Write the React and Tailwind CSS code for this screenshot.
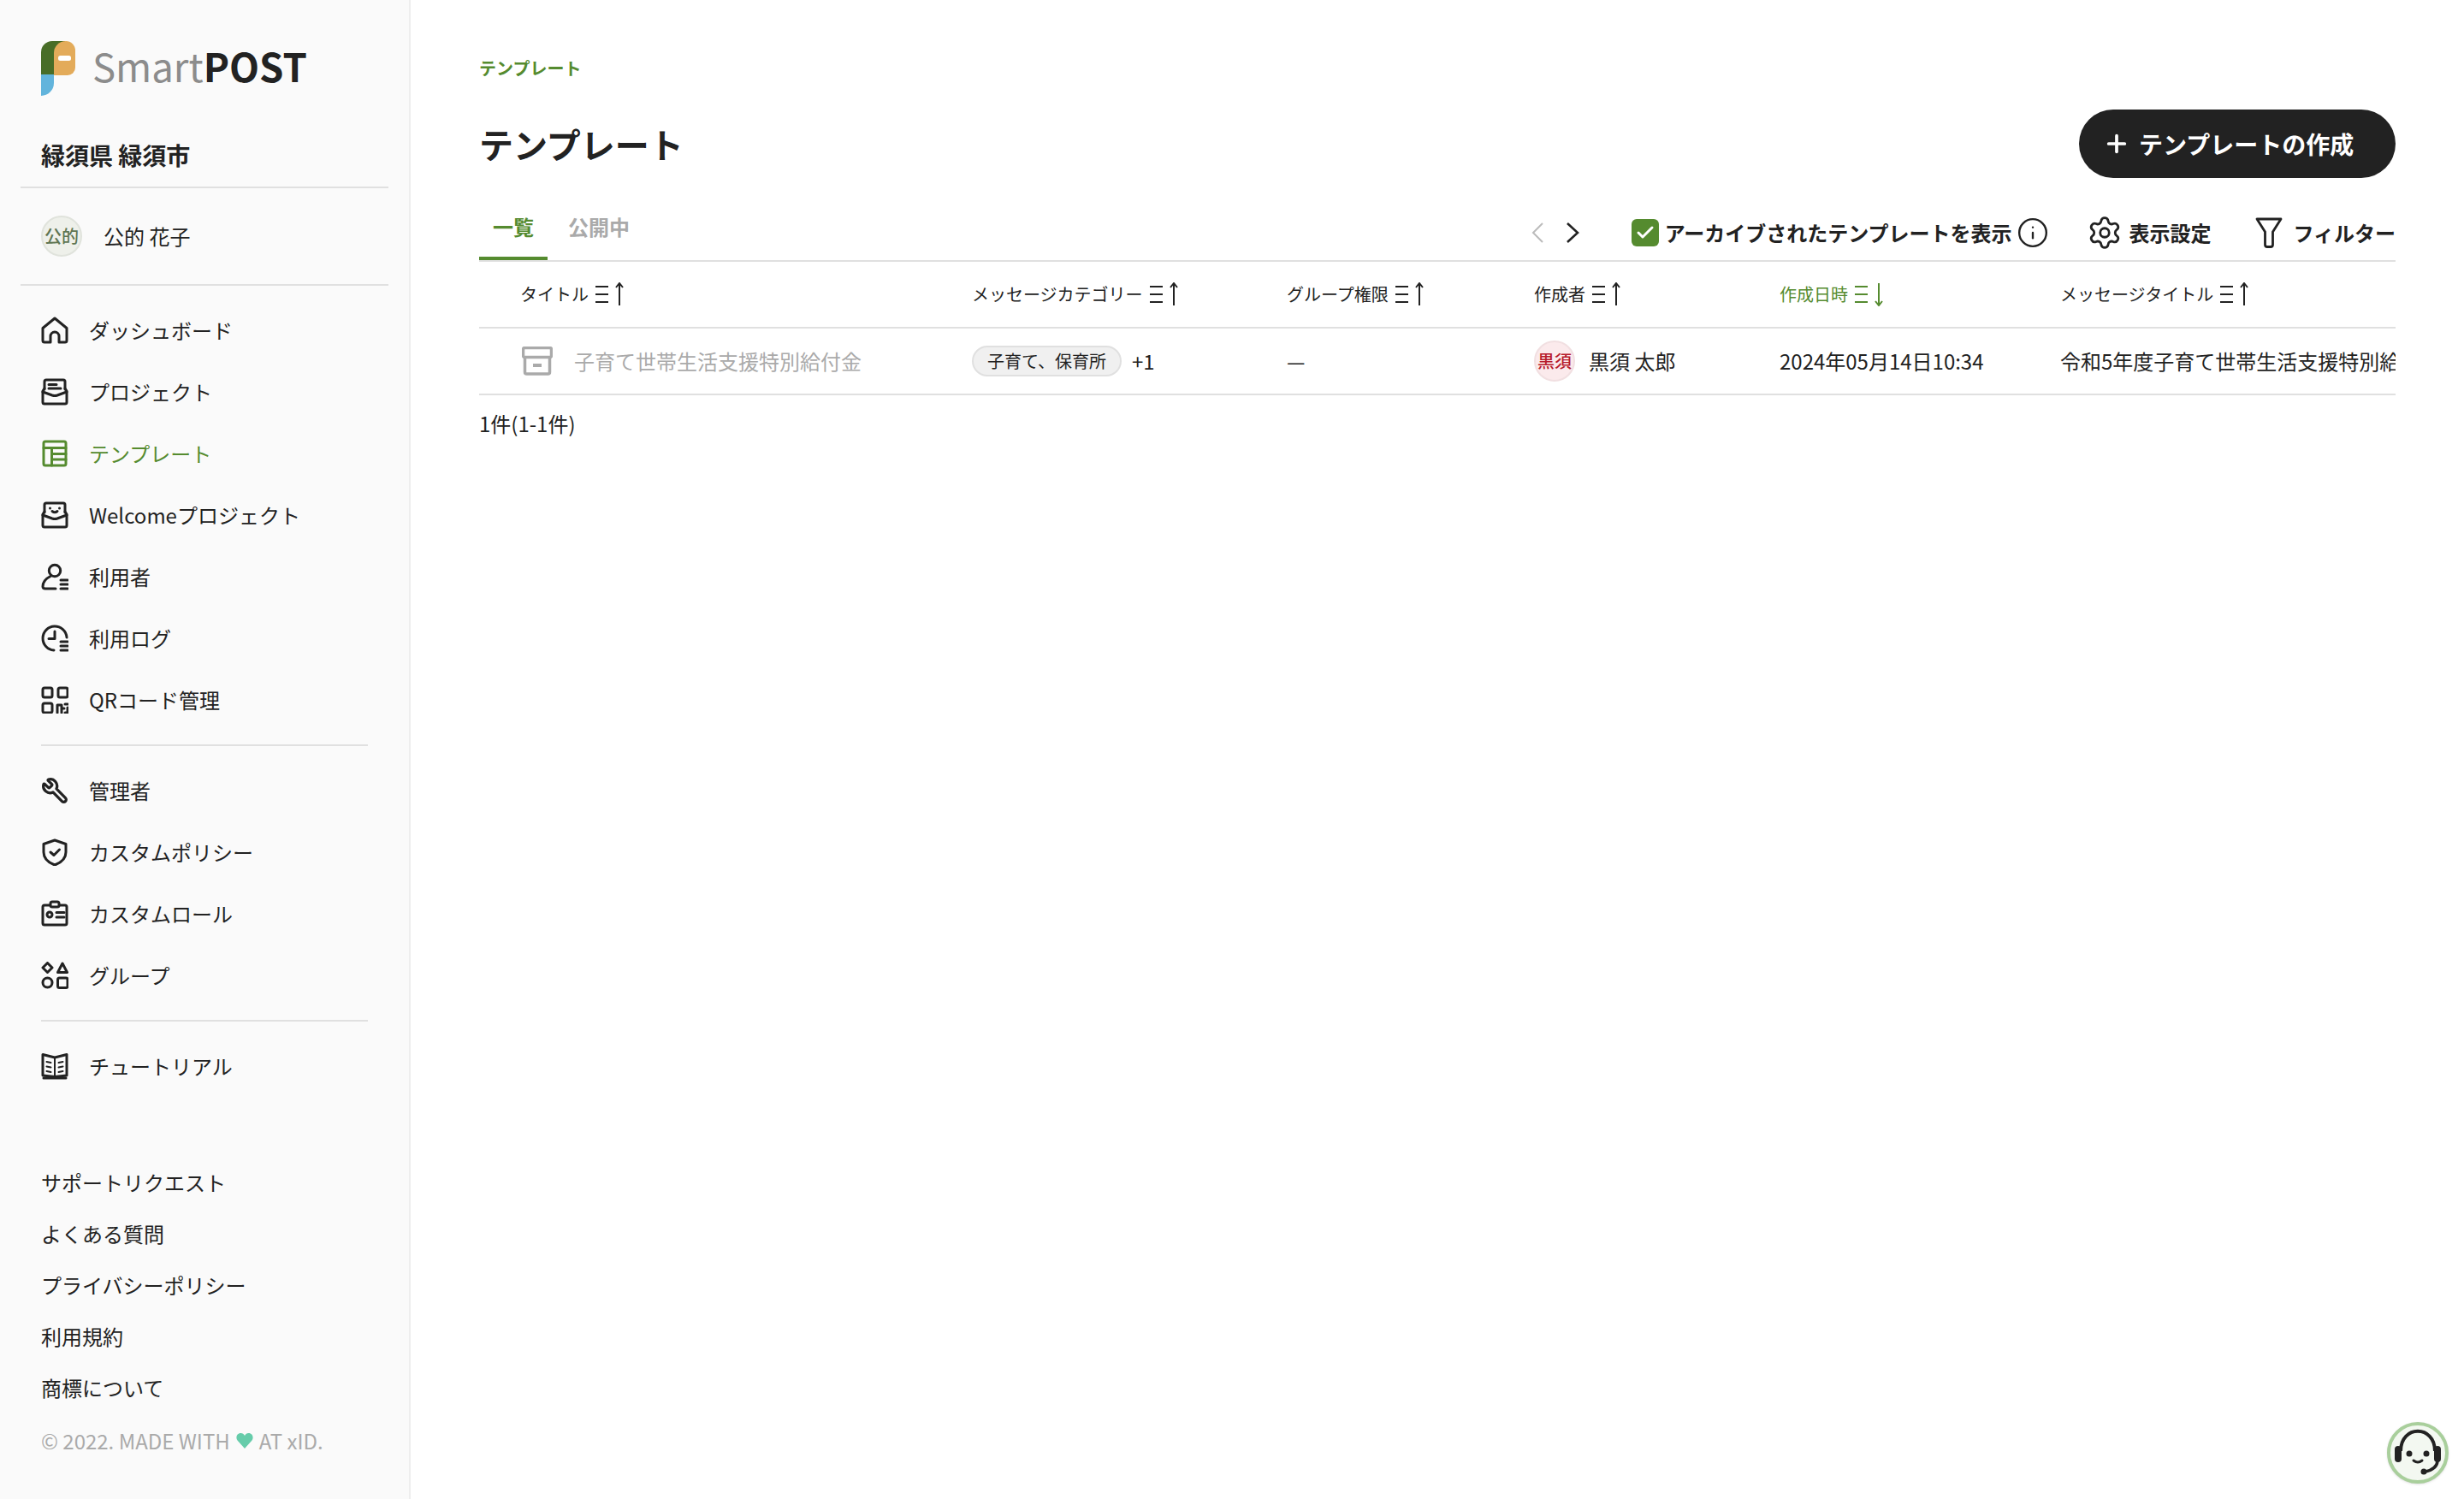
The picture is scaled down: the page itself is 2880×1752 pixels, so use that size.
import React from "react";
import { Wrench, Settings, Info, Plus, Check } from "lucide-react";

function Ic({ children, className = "" }) {
  return (
    <svg
      viewBox="0 0 32 32"
      fill="none"
      stroke="currentColor"
      strokeWidth="3"
      strokeLinecap="round"
      strokeLinejoin="round"
      className={"w-8 h-8 shrink-0 " + className}
    >
      {children}
    </svg>
  );
}

const Tray = () => (
  <>
    <path d="M4 13V4a2 2 0 0 1 2-2h20a2 2 0 0 1 2 2v9" />
    <path d="M4 12l-2 3v13a2 2 0 0 0 2 2h24a2 2 0 0 0 2-2V15l-2-3" />
    <path d="M2 16l11 4q3 1 6 0l11-4" />
  </>
);

const ListLines = () => (
  <path d="M23 20h8M23 25h8M23 30h8" />
);

const icons = {
  home: (
    <Ic>
      <path d="M2 13.500 16 2l14 11.500V28a2 2 0 0 1-2 2h-7v-7a5 5 0 0 0-10 0v7H4a2 2 0 0 1-2-2Z" />
    </Ic>
  ),
  project: (
    <Ic>
      <Tray />
      <path d="M9 7.500h9M9 12h14" />
    </Ic>
  ),
  template: (
    <Ic>
      <rect x="3" y="2" width="26" height="28" rx="2" />
      <path d="M3 9.500h26M12.500 9.500V30M12.500 16.500H29M12.500 23H29" />
    </Ic>
  ),
  welcome: (
    <Ic>
      <Tray />
      <circle cx="10.500" cy="8" r="1.500" fill="currentColor" stroke="none" />
      <circle cx="21.500" cy="8" r="1.500" fill="currentColor" stroke="none" />
      <path d="M13 11.500q3 2.500 6 0" />
    </Ic>
  ),
  user: (
    <Ic>
      <circle cx="16" cy="9" r="6.700" />
      <path d="M11 15.500C6 18 2 22 2 27.500Q2 30 5 30h12" />
      <ListLines />
    </Ic>
  ),
  log: (
    <Ic>
      <path d="M30 15A14 14 0 1 0 15 30" />
      <path d="M16 8v8.500H9" />
      <ListLines />
    </Ic>
  ),
  qr: (
    <Ic>
      <rect x="2" y="2" width="11" height="11" rx="2" />
      <rect x="20" y="2" width="11" height="11" rx="2" />
      <rect x="2" y="20" width="11" height="11" rx="2" />
      <path d="M19 31v-9h5v9M24 26h3M28 21h3M31 25v6h-3" />
    </Ic>
  ),
  wrench: <Wrench size={32} strokeWidth={2.4} className="shrink-0 -scale-x-100" />,
  shield: (
    <Ic>
      <path d="M16 2 29 6.500V16c0 7-5 12-13 15C8 28 3 23 3 16V6.500Z" />
      <path d="m11 16 4 3.500 6.500-6.500" />
    </Ic>
  ),
  role: (
    <Ic>
      <rect x="2" y="6" width="28" height="23" rx="2" />
      <rect x="11" y="2" width="10" height="6" rx="2" fill="#fafafa" />
      <circle cx="10" cy="17" r="3" />
      <path d="M18 14.500h9M18 20h9" />
    </Ic>
  ),
  group: (
    <Ic>
      <path d="M7.500 1.500 13 7l-5.500 5.500L2 7Z" />
      <path d="M25 2l5.500 10.500h-11Z" />
      <circle cx="7.500" cy="24.500" r="5.500" />
      <rect x="19.500" y="19" width="11.500" height="11.500" rx="2" />
    </Ic>
  ),
  book: (
    <Ic>
      <path d="M2 2.500 16 6l14-3.500V27l-14 1.500L2 27Z" />
      <path d="M16 6v22.500M6.500 11l5 1M6.500 16.500l5 1M6.500 22l5 1M25.500 11l-5 1M25.500 16.500l-5 1M25.500 22l-5 1" strokeWidth="2" />
      <path d="M3 30h26" />
    </Ic>
  ),
};

const navMain = [
  ["home", "ダッシュボード"],
  ["project", "プロジェクト"],
  ["template", "テンプレート", true],
  ["welcome", "Welcomeプロジェクト"],
  ["user", "利用者"],
  ["log", "利用ログ"],
  ["qr", "QRコード管理"],
];
const navAdmin = [
  ["wrench", "管理者"],
  ["shield", "カスタムポリシー"],
  ["role", "カスタムロール"],
  ["group", "グループ"],
];
const footerLinks = ["サポートリクエスト", "よくある質問", "プライバシーポリシー", "利用規約", "商標について"];

function NavItem({ icon, label, active }) {
  return (
    <div className={"h-[72px] flex items-center gap-6 pl-12 text-2xl " + (active ? "text-[#558b2f]" : "text-[#222222]")}>
      {icons[icon]}
      <span>{label}</span>
    </div>
  );
}

function SortIcon({ down }) {
  return (
    <svg viewBox="0 0 34 28" className="w-[34px] h-7 shrink-0" fill="none" stroke="currentColor">
      <path d="M0 5h15M0 14h15M0 23h15" strokeWidth="2" />
      {down ? (
        <path d="M28 1v26M24 22l4 5 4-5" strokeWidth="2" />
      ) : (
        <path d="M28 27V1M24 6l4-5 4 5" strokeWidth="2" />
      )}
    </svg>
  );
}

function HeadCell({ label, className, active, down }) {
  return (
    <div className={"flex items-center gap-2 text-[20px] shrink-0 " + (active ? "text-[#558b2f] " : "") + className}>
      <span>{label}</span>
      <SortIcon down={down} />
    </div>
  );
}

export default function App() {
  return (
    <div className="w-[2880px] h-[1752px] flex bg-white text-[#222222] overflow-hidden relative font-['Noto_Sans_CJK_JP',sans-serif]">
      {/* sidebar */}
      <aside className="w-[480px] h-full shrink-0 bg-[#fafafa] border-r-2 border-[#eeeeee]">
        <div className="pt-12 pl-12 flex items-start gap-[20px] h-28">
          <svg viewBox="0 0 40 64" className="w-10 h-16 shrink-0">
            <path d="M0 40V13A13 13 0 0 1 13 0h15v40Z" fill="#486d27" />
            <path d="M0 39h15v10A15 15 0 0 1 0 64Z" fill="#62b4dc" />
            <path d="M15 40V14A14 14 0 0 1 29 0h0a11 11 0 0 1 11 11v20a9 9 0 0 1-9 9Z" fill="#e3ab5a" />
            <rect x="20" y="17" width="15" height="6" rx="2.500" fill="#ffffff" />
          </svg>
          <div className="mt-[3px] text-[45.500px] leading-[1.1] whitespace-nowrap">
            <span className="text-[#8c8c8c]">Smart</span>
            <span className="font-bold">POST</span>
          </div>
        </div>
        <div className="mt-[49px] pl-12 h-10 flex items-center text-[28px] font-bold">緑須県 緑須市</div>
        <div className="mt-[17px] mx-6 h-[2px] bg-[#e0e0e0]" />
        <div className="h-28 flex items-center pl-12 gap-[25px]">
          <div className="w-12 h-12 rounded-full bg-[#eef0ea] border-2 border-[#e0e3dc] text-[#5f7552] text-[20px] font-medium flex items-center justify-center whitespace-nowrap">
            公的
          </div>
          <span className="text-2xl">公的 花子</span>
        </div>
        <div className="mx-6 h-[2px] bg-[#e0e0e0]" />
        <nav className="pt-[16px]">
          {navMain.map(([icon, label, active]) => (
            <NavItem key={label} icon={icon} label={label} active={active} />
          ))}
        </nav>
        <div className="mt-4 ml-12 w-[382px] h-[2px] bg-[#e0e0e0]" />
        <nav className="pt-[16px]">
          {navAdmin.map(([icon, label]) => (
            <NavItem key={label} icon={icon} label={label} />
          ))}
        </nav>
        <div className="mt-4 ml-12 w-[382px] h-[2px] bg-[#e0e0e0]" />
        <nav className="pt-[16px]">
          <NavItem icon="book" label="チュートリアル" />
        </nav>
        <div className="mt-[70px] pl-12">
          {footerLinks.map((l) => (
            <div key={l} className="h-[60px] flex items-center text-2xl">{l}</div>
          ))}
          <div className="mt-[15px] h-[34px] flex items-center gap-[7px] text-2xl text-[#aaaaaa] whitespace-nowrap">
            <span>© 2022. MADE WITH</span>
            <svg viewBox="0 0 20 20" className="w-5 h-5 shrink-0">
              <path d="M10 19 1.500 9.500C-1 6 1 1 5.500 1 7.500 1 9 2 10 4c1-2 2.500-3 4.500-3C19 1 21 6 18.500 9.500Z" fill="#66ccaa" />
            </svg>
            <span>AT xID.</span>
          </div>
        </div>
      </aside>

      {/* main */}
      <main className="flex-1 min-w-0 pl-20 pr-20 pt-[65px]">
        <div className="h-[30px] flex items-center text-[20px] font-bold text-[#558b2f]">テンプレート</div>
        <div className="mt-[33px] h-20 flex items-center justify-between">
          <h1 className="text-[40px] font-bold">テンプレート</h1>
          <button className="w-[370px] h-20 rounded-full bg-[#222222] text-white flex items-center pl-[28px] gap-[10px] text-[28px] font-bold">
            <Plus size={32} strokeWidth={2.8} />
            <span>テンプレートの作成</span>
          </button>
        </div>

        <div className="mt-[24px] flex items-end justify-between border-b-2 border-[#e0e0e0]">
          <div className="flex gap-2 text-2xl font-bold">
            <div className="h-[72px] w-20 pb-[2px] flex items-center justify-center border-b-4 border-[#558b2f] text-[#558b2f]">一覧</div>
            <div className="h-[72px] px-4 pb-[6px] flex items-center text-[#aaaaaa]">公開中</div>
          </div>
          <div className="h-16 flex items-center text-2xl font-bold">
            <svg viewBox="0 0 14 24" className="w-[14px] h-6 shrink-0" fill="none" stroke="#bbbbbb" strokeWidth="2">
              <path d="M13 1 2 12l11 11" />
            </svg>
            <svg viewBox="0 0 16 24" className="ml-[26px] w-4 h-6 shrink-0" fill="none" stroke="#222222" strokeWidth="2.600">
              <path d="m2 1 12 11L2 23" />
            </svg>
            <div className="ml-[61px] w-8 h-8 rounded-md bg-[#558b2f] text-white flex items-center justify-center shrink-0">
              <Check size={24} strokeWidth={3} />
            </div>
            <span className="ml-[7px] whitespace-nowrap">アーカイブされたテンプレートを表示</span>
            <Info size={38} strokeWidth={1.500} className="ml-[6px] shrink-0" />
            <Settings size={42} strokeWidth={1.600} className="ml-[44px] shrink-0" />
            <span className="ml-[7px] whitespace-nowrap">表示設定</span>
            <svg viewBox="0 0 32 36" className="ml-[52px] w-8 h-9 shrink-0" fill="none" stroke="#222222" strokeWidth="2.800" strokeLinejoin="round">
              <path d="M2 2h28L20.500 17v15q0 2.500-2.500 2.500h-4q-2.500 0-2.500-2.500V17Z" />
            </svg>
            <span className="ml-[12px] whitespace-nowrap">フィルター</span>
          </div>
        </div>

        {/* table */}
        <div className="h-[78px] flex items-center border-b-2 border-[#e0e0e0] overflow-hidden whitespace-nowrap">
          <HeadCell label="タイトル" className="w-[576px] pl-[48px]" />
          <HeadCell label="メッセージカテゴリー" className="w-[368px]" />
          <HeadCell label="グループ権限" className="w-[289px]" />
          <HeadCell label="作成者" className="w-[287px]" />
          <HeadCell label="作成日時" className="w-[328px]" active down />
          <HeadCell label="メッセージタイトル" className="flex-1" />
        </div>
        <div className="h-[78px] flex items-center border-b-2 border-[#e0e0e0] overflow-hidden whitespace-nowrap text-2xl">
          <div className="w-[576px] shrink-0 pl-[50px] flex items-center gap-[25px] text-[#aaaaaa]">
            <svg viewBox="0 0 36 34" className="w-9 h-[34px] shrink-0" fill="none" stroke="#aaaaaa" strokeWidth="3.500" strokeLinejoin="round">
              <rect x="1.500" y="1.500" width="33" height="11" rx="2" />
              <path d="M3.500 12.500V30a2 2 0 0 0 2 2h25a2 2 0 0 0 2-2V12.500" />
              <path d="M13 22h10" strokeWidth="4" />
            </svg>
            <span>子育て世帯生活支援特別給付金</span>
          </div>
          <div className="w-[368px] shrink-0 flex items-center gap-3">
            <span className="h-9 px-4 flex items-center rounded-full bg-[#f0f0f0] border-2 border-[#e0e0e0] text-[20px]">子育て、保育所</span>
            <span>+1</span>
          </div>
          <div className="w-[289px] shrink-0">—</div>
          <div className="w-[287px] shrink-0 flex items-center gap-4">
            <div className="w-12 h-12 rounded-full bg-[#fbeaec] border-2 border-[#f1dfe1] text-[#b71c2c] text-[20px] font-medium flex items-center justify-center whitespace-nowrap">黒須</div>
            <span>黒須 太郎</span>
          </div>
          <div className="w-[328px] shrink-0">2024年05月14日10:34</div>
          <div className="flex-1 min-w-0 overflow-hidden">令和5年度子育て世帯生活支援特別給付金のお知らせ</div>
        </div>
        <div className="mt-[16px] h-[34px] flex items-center text-2xl">1件(1-1件)</div>
      </main>

      {/* chat widget */}
      <div className="absolute left-[2790px] top-[1662px] w-[72px] h-[72px] rounded-full bg-[#f3f8f1] border-[4px] border-[#a9cf9c] shadow-sm flex items-center justify-center">
        <svg viewBox="0 0 64 64" className="w-[64px] h-[64px]">
          <path d="M12 30C12 -1 52 -1 52 30" fill="none" stroke="#222222" strokeWidth="4" />
          <rect x="5" y="24" width="8" height="19" rx="4" fill="#222222" />
          <rect x="51" y="24" width="8" height="19" rx="4" fill="#222222" />
          <path d="M55 42q-1 9-14 12" fill="none" stroke="#222222" strokeWidth="3.500" />
          <circle cx="39" cy="54" r="3.500" fill="#222222" />
          <circle cx="22" cy="33" r="3.500" fill="#222222" />
          <circle cx="42" cy="33" r="3.500" fill="#222222" />
          <path d="M27 41q5 4 10 0" fill="none" stroke="#222222" strokeWidth="3" strokeLinecap="round" />
        </svg>
      </div>
    </div>
  );
}
